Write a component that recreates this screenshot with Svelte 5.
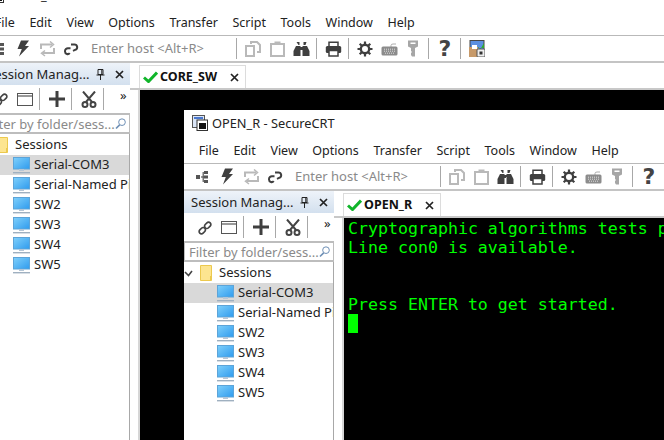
<script>
  const menus = ['File', 'Edit', 'View', 'Options', 'Transfer', 'Script', 'Tools', 'Window', 'Help'];
  const sessions = ['Serial-COM3', 'Serial-Named Pipe', 'SW2', 'SW3', 'SW4', 'SW5'];
</script>

{#snippet closeIcon()}
  <svg width="9" height="9" viewBox="0 0 9 9"><path d="M1 1l7 7M8 1L1 8" stroke="#222" stroke-width="1.7" fill="none" /></svg>
{/snippet}

{#snippet monitor()}
  <svg class="monitor" width="17" height="17" viewBox="0 0 17 17">
    <defs>
      <linearGradient id="screen" x1="0" y1="0" x2="1" y2="1">
        <stop offset="0" stop-color="#7fd0fb" />
        <stop offset="1" stop-color="#2f9bee" />
      </linearGradient>
    </defs>
    <rect x="0.5" y="0.5" width="16" height="11.5" fill="url(#screen)" stroke="#5da4d8" />
    <rect x="6" y="12" width="5" height="2" fill="#b5c6d6" />
    <rect x="0" y="15" width="17" height="1.4" fill="#9fb0c0" />
  </svg>
{/snippet}

{#snippet crtWindow(title, tab, body)}
  <header class="titlebar">
    <svg width="16" height="16" viewBox="0 0 16 16">
      <rect x="0.5" y="0.5" width="12" height="12" fill="#dbe6f7" stroke="#555" />
      <rect x="2" y="2" width="9" height="2" fill="#4a78d0" />
      <rect x="5" y="5" width="10.5" height="10.5" fill="#fff" stroke="#333" />
      <rect x="7" y="8" width="7" height="6" fill="#111" />
    </svg>
    <span>{title}</span>
  </header>

  <nav class="menubar">
    {#each menus as m}<span>{m}</span>{/each}
  </nav>

  <div class="toolbar">
    <span class="slot">
      <svg width="16" height="16" viewBox="0 0 16 16" fill="#555">
        <rect x="1" y="6" width="4" height="4" /><rect x="6" y="7.4" width="3" height="1.2" />
        <rect x="9" y="2" width="4" height="3" /><rect x="9" y="6.5" width="4" height="3" /><rect x="9" y="11" width="4" height="3" />
        <rect x="7.6" y="3" width="1.2" height="10" />
      </svg>
    </span>
    <span class="slot">
      <svg width="16" height="17" viewBox="0 0 16 17"><path d="M6 0.5h8L10 6h4L4 16.5 6.8 9H2.5z" fill="#3f3f3f" /></svg>
    </span>
    <span class="slot">
      <svg width="17" height="16" viewBox="0 0 17 16" fill="none" stroke="#b9b9b9" stroke-width="2">
        <path d="M2 8V3.5h11M15 7v5H4" /><path d="M11 0.5l3.5 3L11 6.5M6 9.5l-3.5 2.800L6 15" stroke-width="1.500" />
      </svg>
    </span>
    <span class="slot">
      <svg width="16" height="16" viewBox="0 0 16 16" fill="none" stroke="#3f3f3f" stroke-width="2">
        <path d="M7.500 7.200H5.500a3 3 0 0 0-3.500 3.300c0 2.600 3.400 3.500 4.700 1.500" />
        <path d="M8 3.500h3.500a2.700 2.700 0 0 1 1 5.200L10 9.800" />
      </svg>
    </span>
    <span class="host">Enter host &lt;Alt+R&gt;</span>
    <i class="sep first"></i>
    <span class="slot">
      <svg width="16" height="16" viewBox="0 0 16 16" fill="none" stroke="#b9b9b9" stroke-width="2">
        <path d="M6 3V1h6l3 3v7h-3" /><rect x="1" y="5" width="8" height="10" />
      </svg>
    </span>
    <span class="slot">
      <svg width="15" height="16" viewBox="0 0 15 16" fill="none" stroke="#b9b9b9" stroke-width="2">
        <rect x="1" y="3" width="13" height="12" /><rect x="4.500" y="0.500" width="6" height="3.500" fill="#b9b9b9" stroke="none" />
      </svg>
    </span>
    <span class="slot">
      <svg width="17" height="16" viewBox="0 0 17 16" fill="#3f3f3f">
        <path d="M3.500 1h3v3h-1zM10.500 4V1h3l-1 3zM3 5h4.500v10H0.500V10zM9.500 5H14l2.500 5v5H9.500zM7.500 6h2v3h-2z" />
      </svg>
    </span>
    <i class="sep"></i>
    <span class="slot">
      <svg width="17" height="16" viewBox="0 0 17 16">
        <path d="M4 5V1.200h9V5" fill="none" stroke="#3f3f3f" stroke-width="1.500" />
        <rect x="0.800" y="5" width="15.400" height="7" rx="1.500" fill="#3f3f3f" />
        <rect x="4" y="9.500" width="9" height="5.500" fill="#fff" stroke="#3f3f3f" stroke-width="1.500" />
      </svg>
    </span>
    <i class="sep"></i>
    <span class="slot">
      <svg width="16" height="16" viewBox="0 0 16 16" fill="none" stroke="#3f3f3f">
        <circle cx="8" cy="8" r="4.200" stroke-width="2.400" />
        <path d="M8 0.500v3M8 12.500v3M0.500 8h3M12.500 8h3M2.700 2.700l2.100 2.100M11.200 11.200l2.100 2.100M13.300 2.700l-2.100 2.100M4.800 11.200l-2.100 2.100" stroke-width="2.200" />
      </svg>
    </span>
    <span class="slot">
      <svg width="17" height="14" viewBox="0 0 17 14">
        <path d="M10 5V3.500Q10 2 12 2h3" fill="none" stroke="#9a9a9a" stroke-width="0.800" />
        <rect x="0.500" y="4.500" width="16" height="9" rx="1.500" fill="#8c8c8c" />
        <path d="M3 7.200h11M3 9.200h11M4 11.200h9" stroke="#ddd" stroke-width="1" stroke-dasharray="1 1" />
      </svg>
    </span>
    <span class="slot">
      <svg width="12" height="17" viewBox="0 0 12 17">
        <path d="M1 0.500h10v6L8 8v8.500H5L4 15v-2l1-1-1-1V8L1 6.500z" fill="#a6a6a6" />
        <rect x="3.500" y="2.500" width="5" height="1.500" fill="#fff" />
      </svg>
    </span>
    <i class="sep"></i>
    <span class="slot help">?</span>
    <i class="sep"></i>
    <span class="slot">
      <svg width="16" height="17" viewBox="0 0 16 17">
        <rect x="1" y="0.500" width="14" height="10" fill="#5b8fe0" stroke="#444" />
        <path d="M9 7l2.500 2L15 3v5H9z" fill="#2faa2f" />
        <path d="M0 7h9v10H0z" fill="#c79a6a" />
        <rect x="3" y="5" width="5" height="4" fill="#fff" />
        <rect x="8" y="9" width="8" height="8" rx="1" fill="#eee" stroke="#555" />
        <rect x="10.500" y="11.500" width="3" height="3" fill="#333" />
      </svg>
    </span>
  </div>

  <div class="main">
    <aside class="panel">
      <div class="panel-title">
        <span class="panel-name">Session Manag...</span>
        <svg class="pin" width="9" height="11" viewBox="0 0 9 11"><path d="M2 0.500h5v5H2zM0.500 6h8M4.500 6v5M5.800 1v4.500" fill="none" stroke="#222" stroke-width="1" /></svg>
        {@render closeIcon()}
      </div>

      <div class="panel-tools">
        <span class="slot">
          <svg width="17" height="17" viewBox="0 0 17 17" fill="none" stroke="#444" stroke-width="1.700">
            <rect x="-4.500" y="-2.300" width="7" height="4.600" rx="2.300" transform="translate(6 11) rotate(-45)" />
            <rect x="-2.500" y="-2.300" width="7" height="4.600" rx="2.300" transform="translate(10 7) rotate(-45)" />
          </svg>
        </span>
        <span class="slot">
          <svg width="16" height="13" viewBox="0 0 16 13" fill="none" stroke="#555"><rect x="0.500" y="0.500" width="15" height="12" /><path d="M1 3h14" stroke-width="2" stroke="#999" /></svg>
        </span>
        <i class="sep"></i>
        <span class="slot">
          <svg width="16" height="16" viewBox="0 0 16 16"><path d="M6.500 0h3v6.500H16v3H9.500V16h-3V9.500H0v-3h6.500z" fill="#3f3f3f" /></svg>
        </span>
        <i class="sep"></i>
        <span class="slot">
          <svg width="16" height="17" viewBox="0 0 16 17" fill="none" stroke="#444" stroke-width="2">
            <path d="M2 0.500L11 11M14 0.500L5 11" /><circle cx="4" cy="13.500" r="2.500" /><circle cx="12" cy="13.500" r="2.500" />
          </svg>
        </span>
        <i class="sep"></i>
        <span class="more">»</span>
      </div>

      <div class="filter">
        <span class="filter-text">Filter by folder/sess...</span>
        <svg width="15" height="15" viewBox="0 0 17 17" fill="none" stroke="#6d8fb5">
          <circle cx="10.500" cy="6.500" r="5" stroke-width="1.500" /><path d="M7 10.500l-5.500 5.500" stroke-width="2.400" />
        </svg>
      </div>

      <ul class="tree">
        <li class="folder">
          <svg class="chevron" width="9" height="7" viewBox="0 0 9 7"><path d="M1 2l3.500 3.500L8 1" fill="none" stroke="#444" stroke-width="1.600" /></svg>
          <svg width="13" height="16" viewBox="0 0 13 16"><path d="M0.500 0.500h11v15H0.500z" fill="#fde590" stroke="#ecc94e" /><path d="M10 11h2v4h-2z" fill="#ecc94e" /></svg>
          <span>Sessions</span>
        </li>
        {#each sessions as s, i}
          <li class="session" class:active={i === 0}>
            {@render monitor()}
            <span>{s}</span>
          </li>
        {/each}
      </ul>
    </aside>

    <section class="content">
      <div class="tabstrip">
        <div class="tab">
          <svg width="15" height="12" viewBox="0 0 15 12"><path d="M1 6.500L5.500 10.500 14 1.500" fill="none" stroke="#10b52a" stroke-width="3" /></svg>
          <b>{tab}</b>
          {@render closeIcon()}
        </div>
      </div>
      <div class="terminal">
        {@render body()}
      </div>
    </section>
  </div>
{/snippet}

{#snippet innerTerm()}
  <pre class="output">Cryptographic algorithms tests passed.
Line con0 is available.


Press ENTER to get started.
<span class="cursor"></span></pre>
{/snippet}

{#snippet outerTerm()}
  <div class="window inner">
    {@render crtWindow('OPEN_R - SecureCRT', 'OPEN_R', innerTerm)}
  </div>
{/snippet}

<div class="screen">
  <div class="window outer">
    {@render crtWindow('CORE_SW - SecureCRT', 'CORE_SW', outerTerm)}
  </div>
</div>

<style>
  :global(body) {
    margin: 0;
    background: #fff;
  }

  .screen {
    width: 664px;
    height: 440px;
    overflow: hidden;
    font-family: "Noto Sans", sans-serif;
    font-size: 13px;
    color: #222;
  }

  .window {
    display: flex;
    flex-direction: column;
    background: #fff;
  }

  .outer {
    width: 720px;
    height: 470px;
    margin: -18px 0 0 -20px;
  }

  .inner {
    position: absolute;
    left: 44px;
    top: 20px;
    width: 600px;
    height: 340px;
  }

  .titlebar {
    height: 27px;
    padding: 0 0 1px 8px;
    display: flex;
    align-items: center;
    gap: 4px;
    box-sizing: border-box;
    font-size: 12.8px;
  }

  .menubar {
    height: 27px;
    box-sizing: border-box;
    padding-left: 7.5px;
    display: flex;
    align-items: center;
    border-bottom: 1px solid #b9b9b9;
    font-size: 12.5px;
  }

  .menubar span {
    padding: 0 7.3px;
  }

  .toolbar {
    height: 27px;
    box-sizing: border-box;
    padding-left: 7px;
    display: flex;
    align-items: center;
    border-bottom: 2px solid #c4c4c4;
  }

  .slot {
    width: 24px;
    height: 24px;
    flex: none;
    display: flex;
    align-items: center;
    justify-content: center;
  }

  .help {
    font-family: "DejaVu Sans", sans-serif;
    font-size: 22px;
    font-weight: bold;
    color: #444;
  }

  .host {
    width: 149px;
    padding: 0 0 1px 8px;
    box-sizing: border-box;
    color: #8a8a8a;
    white-space: nowrap;
  }

  .sep {
    width: 1px;
    height: 21px;
    flex: none;
    margin: 0 4px 0 3px;
    background: #a8a8a8;
  }

  .sep.first {
    margin-left: 4px;
    margin-right: 4px;
  }

  .main {
    flex: 1;
    display: flex;
    min-height: 0;
  }

  .panel {
    width: 150px;
    flex: none;
    display: flex;
    flex-direction: column;
    overflow: hidden;
  }

  .panel-title {
    height: 22px;
    display: flex;
    align-items: center;
    padding: 0 6px 0 7px;
    background: linear-gradient(#eef3f9, #d3e0ee);
  }

  .panel-name {
    flex: 1;
    white-space: nowrap;
  }

  .pin {
    margin-right: 10px;
  }

  .panel-tools {
    height: 28px;
    box-sizing: border-box;
    padding-left: 9px;
    display: flex;
    align-items: center;
  }

  .panel-tools .sep {
    height: 22px;
    margin: 0 5px 0 2px;
  }

  .more {
    font-size: 13px;
    margin: -9px 0 0 11px;
  }

  .filter {
    height: 21px;
    box-sizing: border-box;
    border: 2px solid #bdbdbd;
    border-width: 2px 1px 2px 1px;
    padding: 0 3px 0 4px;
    display: flex;
    align-items: center;
    justify-content: space-between;
    color: #8a8a8a;
    white-space: nowrap;
    overflow: hidden;
  }

  .tree {
    flex: 1;
    list-style: none;
    margin: 0;
    padding: 1px 0 0;
    border-right: 1px solid #a8a8a8;
  }

  .tree li {
    height: 20px;
    display: flex;
    align-items: center;
    white-space: nowrap;
    overflow: hidden;
  }

  .tree li span {
    padding-bottom: 2px;
  }

  .chevron {
    margin-right: 7px;
  }

  .folder span {
    margin-left: 6px;
  }

  .session {
    padding-left: 33px;
    gap: 4px;
  }

  .monitor {
    flex: none;
  }

  .session.active {
    background: #d9d9d9;
  }

  .content {
    flex: 1;
    display: flex;
    flex-direction: column;
    min-width: 0;
  }

  .tabstrip {
    height: 27px;
    padding: 2px 0 0 9px;
    box-sizing: border-box;
    display: flex;
    border-bottom: 2px solid #c8c8c8;
  }

  .tab {
    height: 23px;
    box-sizing: border-box;
    padding: 0 6px 0 3px;
    display: flex;
    align-items: center;
    border: 1px solid #dcdcdc;
    border-bottom: none;
    gap: 2px;
  }

  .tab b {
    margin-right: 11px;
    padding-bottom: 1px;
    font-size: 12.5px;
    color: #111;
  }

  .terminal {
    flex: 1;
    margin-left: 8px;
    border-left: 2px solid #d6d6d6;
    background: #000;
    position: relative;
    overflow: hidden;
  }

  .output {
    margin: 0;
    padding: 1px 0 0 4px;
    font-family: "DejaVu Sans Mono", monospace;
    font-size: 16.6px;
    line-height: 19px;
    color: #00ff00;
    white-space: pre;
  }

  .cursor {
    display: inline-block;
    width: 10px;
    height: 19px;
    background: #00ff00;
    vertical-align: top;
  }
</style>
